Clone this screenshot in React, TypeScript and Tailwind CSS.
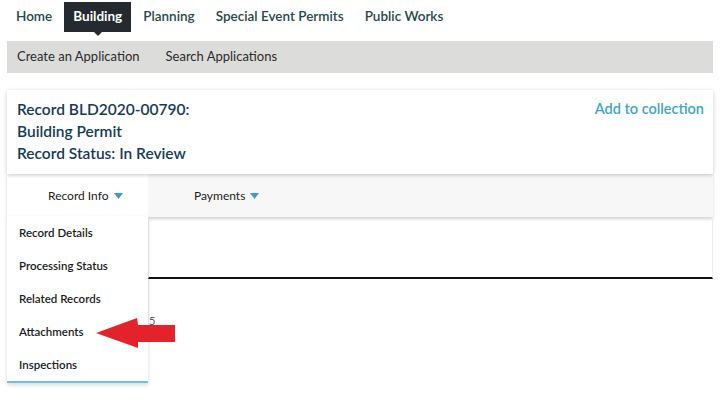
import { ReactNode } from 'react'

const NAV = ['Home', 'Building', 'Planning', 'Special Event Permits', 'Public Works']
const MENU = ['Record Details', 'Processing Status', 'Related Records', 'Attachments', 'Inspections']

function Caret() {
  return (
    <svg width="9" height="6" viewBox="0 0 9 6" className="ml-[5px] mt-[1px]" aria-hidden="true">
      <path d="M0 0 H9 L4.5 6 Z" fill="#3e9cc4" />
    </svg>
  )
}

function Tab({ children, active }: { children: ReactNode; active?: boolean }) {
  return (
    <div
      className={
        active
          ? 'w-[141px] h-full bg-white flex items-center pl-[41px] text-[12px] text-[#1b1b1b]'
          : 'h-full flex items-center pl-[46px] text-[12px] text-[#1b1b1b]'
      }
    >
      {children}
      <Caret />
    </div>
  )
}

export default function App() {
  return (
    <div className="relative w-[725px] h-[400px] overflow-hidden bg-white font-['Lato','Open_Sans',sans-serif]">
      {/* Top navigation */}
      <nav className="flex items-center h-[32px] pt-[1px] pl-[7px] gap-[3px]">
        {NAV.map((item) =>
          item === 'Building' ? (
            <div key={item} className="relative h-[30px] flex items-center px-[9px] bg-[#252a30] text-white text-[13.5px] font-bold">
              {item}
              <span className="absolute left-1/2 -translate-x-1/2 top-full w-0 h-0 border-x-[4px] border-x-transparent border-t-[4px] border-t-[#252a30]" />
            </div>
          ) : (
            <div key={item} className="h-[30px] flex items-center px-[9px] text-[13.5px] font-semibold text-[#27474b]">
              {item}
            </div>
          )
        )}
      </nav>

      {/* Sub navigation */}
      <div className="ml-[7px] mr-[12px] mt-[9px] h-[32px] bg-[#dcdcdb] flex items-center pl-[10px] gap-[26px] text-[13px] text-[#2b2b2b]">
        <span>Create an Application</span>
        <span>Search Applications</span>
      </div>

      {/* Record header card */}
      <div className="ml-[7px] mr-[12px] mt-[17px] bg-white shadow-[0_1px_4px_rgba(0,0,0,0.22)] relative z-10 flex justify-between pl-[10px] pr-[9px] pt-[8px] pb-[10px]">
        <div className="text-[15.5px] leading-[22px] font-semibold text-[#163b55]">
          <div>Record BLD2020-00790:</div>
          <div>Building Permit</div>
          <div>Record Status: In Review</div>
        </div>
        <div className="text-[14.5px] leading-[22px] font-semibold text-[#3ba6c9]">Add to collection</div>
      </div>

      {/* Tabs */}
      <div className="ml-[7px] mr-[12px] h-[43px] bg-[#f7f7f7] shadow-[0_2px_3px_rgba(0,0,0,0.18)] flex">
        <Tab active>Record Info</Tab>
        <Tab>Payments</Tab>
      </div>

      {/* Tab content */}
      <div className="ml-[7px] mr-[12px] flex">
        <div className="w-[141px]" />
        <div className="flex-1">
          <div className="h-[62px] border-l border-r border-[#ececec] border-b-2 border-b-[#111]" />
          <div className="h-[50px] border-l border-[#ececec] relative">
            <span className="absolute left-[0px] top-[34px] text-[11px] text-[#555]">5</span>
          </div>
        </div>
      </div>

      {/* Dropdown menu */}
      <div className="absolute left-[7px] top-[216px] w-[141px] bg-white border-b-2 border-b-[#72bfd9] shadow-[0_2px_4px_rgba(0,0,0,0.15)] z-20">
        {MENU.map((item) => (
          <div key={item} className="h-[33px] flex items-center pl-[12px] text-[11.5px] font-semibold text-[#1b1b1b]">
            {item}
          </div>
        ))}
      </div>

      {/* Red annotation arrow */}
      <svg className="absolute left-[95px] top-[317px] z-30" width="82" height="32" viewBox="0 0 82 32" aria-hidden="true">
        <path d="M1 16 L42 1 L43 8 L80 8 L80 25 L43 25 L43 31 Z" fill="#e3222b" />
      </svg>
    </div>
  )
}
